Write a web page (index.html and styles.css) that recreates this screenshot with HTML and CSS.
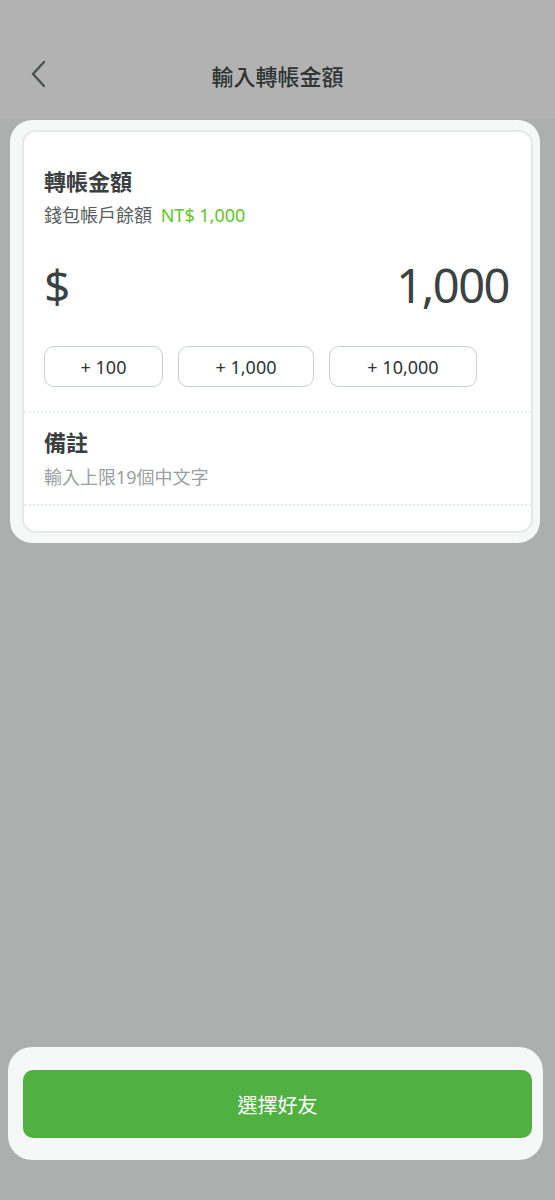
FILE: index.html
```html
<!DOCTYPE html>
<html>
    <head>
        <title>輸入轉帳金額</title>
        <meta charset="UTF-8">
        <meta name="viewport" content="width=device-width, initial-scale=1.0">
        <link rel="stylesheet" href="styles.css">
    </head>
    <body>
        <div class="page">
            <div class="topbar">
                <a class="back" href="#">
                    <svg width="16" height="28" viewBox="0 0 16 28">
                        <path d="M14 2 L3 14 L14 26" fill="none" stroke="#4a5252" stroke-width="2.4" stroke-linecap="round" stroke-linejoin="round"/>
                    </svg>
                </a>
                <h1>輸入轉帳金額</h1>
            </div>

            <div class="card-wrap">
                <div class="card">
                    <div class="amount-section">
                        <h2>轉帳金額</h2>
                        <div class="balance">錢包帳戶餘額 <span class="green">NT$ 1,000</span></div>
                        <div class="amount-row">
                            <span class="dollar">$</span>
                            <span class="amount">1,000</span>
                        </div>
                        <div class="quick">
                            <button type="button" class="chip chip-a">+ 100</button>
                            <button type="button" class="chip chip-b">+ 1,000</button>
                            <button type="button" class="chip chip-c">+ 10,000</button>
                        </div>
                    </div>
                    <div class="memo">
                        <h2>備註</h2>
                        <div class="placeholder">輸入上限19個中文字</div>
                    </div>
                </div>
            </div>

            <div class="footer">
                <button type="button" class="main-button">選擇好友</button>
            </div>
        </div>
    </body>
</html>
```

FILE: styles.css
```css
body {
    margin: 0;
    padding: 0;
    background-color: #adaeae;
    font-family: "Noto Sans", "Noto Sans CJK TC", sans-serif;
    color: #3d4343;
}
.page {
    display: flex;
    flex-direction: column;
    min-height: 1200px;
}
.topbar {
    height: 118px;
    background-color: #b2b2b2;
    display: flex;
    align-items: center;
    justify-content: center;
    position: relative;
    padding-top: 32px;
    box-sizing: border-box;
}
.topbar h1 {
    margin: 0;
    font-size: 22px;
    font-weight: 500;
    color: #2f3434;
}
.back {
    position: absolute;
    left: 30px;
    top: 60px;
    display: block;
    line-height: 0;
}
.card-wrap {
    margin: 2px 15px 0 10px;
    padding: 10px 7px 10px 12px;
    background-color: #f6f8f8;
    border-radius: 22px;
}
.card {
    background-color: #fff;
    border: 2px solid #e3e9e9;
    border-radius: 14px;
    height: 403px;
    box-sizing: border-box;
}
.amount-section {
    padding: 34px 22px 24px 20px;
    border-bottom: 2px dotted #e6ebeb;
}
h2 {
    margin: 0;
    font-size: 22px;
    font-weight: 700;
    line-height: 30px;
    color: #3a4040;
}
.balance {
    font-size: 18px;
    color: #575d5d;
    line-height: 26px;
    margin-top: 6px;
}
.green {
    color: #5ec822;
    margin-left: 4px;
}
.amount-row {
    display: flex;
    justify-content: space-between;
    align-items: center;
    margin-top: 25px;
    height: 64px;
}
.dollar {
    font-size: 46px;
    color: #3a4242;
}
.amount {
    font-size: 47px;
    color: #3a4242;
    letter-spacing: -1.5px;
}
.quick {
    display: flex;
    gap: 15px;
    margin-top: 29px;
}
.chip {
    height: 41px;
    background-color: #fff;
    border: 1px solid #c9d0d0;
    border-radius: 10px;
    font-family: "Noto Sans", sans-serif;
    font-size: 18px;
    color: #2f3434;
    padding: 0;
}
.chip-a { width: 119px; }
.chip-b { width: 136px; }
.chip-c { width: 148px; }
.memo {
    padding: 14px 22px 15px 20px;
    border-bottom: 2px dotted #e6ebeb;
}
.placeholder {
    font-size: 18px;
    color: #9aa0a0;
    margin-top: 8px;
    line-height: 24px;
}
.footer {
    margin: auto 12px 40px 8px;
    padding: 23px 11px 22px 15px;
    background-color: #f6f8f8;
    border-radius: 24px;
}
.main-button {
    display: block;
    width: 100%;
    height: 68px;
    border: none;
    border-radius: 10px;
    background-color: #50b142;
    color: #fff;
    font-family: "Noto Sans", "Noto Sans CJK TC", sans-serif;
    font-size: 20px;
}
```
